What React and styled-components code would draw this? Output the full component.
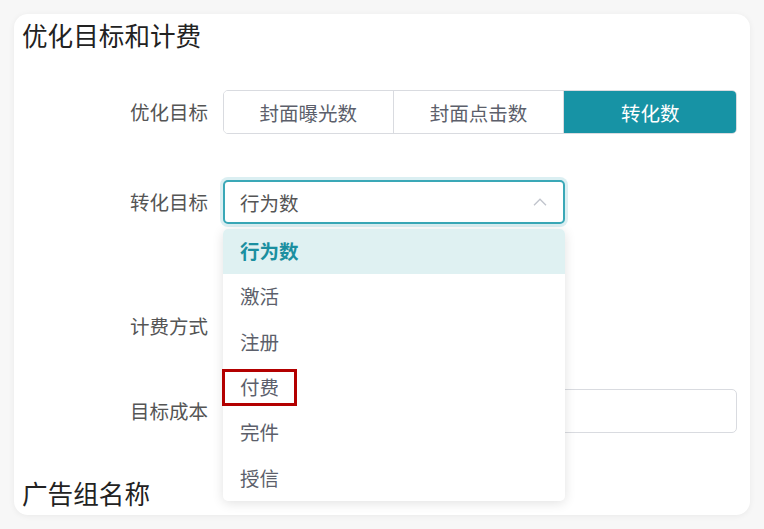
import React from "react";
import styled, { createGlobalStyle } from "styled-components";

const Global = createGlobalStyle`
  html, body { margin: 0; padding: 0; background: #f7f7f7; }
  body { font-family: "Noto Sans CJK SC", "Noto Sans", sans-serif; }
  * { box-sizing: border-box; }
`;

const Page = styled.div`
  width: 764px;
  height: 529px;
  padding: 14px 14px 0 14px;
  overflow: hidden;
`;

const Card = styled.div`
  width: 736px;
  height: 501px;
  background: #fff;
  border-radius: 14px;
  box-shadow: 0 1px 6px rgba(0, 0, 0, 0.06);
  padding: 3px 13px 0 8px;
  position: relative;
`;

const Title = styled.h2`
  margin: ${(p) => p.$mt || 0}px 0 0 0;
  font-size: 25.6px;
  font-weight: 400;
  line-height: 36px;
  color: #222;
`;

const Row = styled.div`
  display: grid;
  grid-template-columns: 186px 514px;
  column-gap: 15px;
  align-items: center;
  height: 44px;
  margin-top: ${(p) => p.$mt}px;
  position: relative;
`;

const Label = styled.div`
  text-align: right;
  font-size: 19.5px;
  color: #555;
  line-height: 44px;
`;

const Segmented = styled.div`
  display: flex;
  height: 44px;
  border: 1px solid #d9dbe0;
  border-radius: 5px;
  overflow: hidden;
`;

const Segment = styled.div`
  flex: ${(p) => p.$w};
  display: flex;
  align-items: center;
  justify-content: center;
  font-size: 19.5px;
  color: ${(p) => (p.$active ? "#fff" : "#5c5f6b")};
  background: ${(p) => (p.$active ? "#1793a5" : "#fff")};
  border-left: ${(p) => (p.$first ? "none" : "1px solid #d9dbe0")};
`;

const SelectWrap = styled.div`
  position: relative;
  width: 342px;
`;

const SelectBox = styled.div`
  height: 44px;
  border: 2px solid #3aa8b7;
  border-radius: 5px;
  box-shadow: 0 0 0 3px rgba(58, 168, 183, 0.18);
  display: flex;
  align-items: center;
  justify-content: space-between;
  padding: 0 16px 0 15px;
  font-size: 19.5px;
  color: #555;
  background: #fff;
`;

const Menu = styled.ul`
  position: absolute;
  left: 0;
  top: 49px;
  width: 342px;
  margin: 0;
  padding: 0;
  list-style: none;
  background: #fff;
  border-radius: 5px;
  box-shadow: 0 2px 12px rgba(0, 0, 0, 0.12);
  z-index: 5;
  overflow: visible;
`;

const Item = styled.li`
  position: relative;
  height: 45.3px;
  display: flex;
  align-items: center;
  padding-left: 17px;
  padding-bottom: 2px;
  font-size: 19.5px;
  font-weight: ${(p) => (p.$active ? 700 : 400)};
  color: ${(p) => (p.$active ? "#1a8fa0" : "#5c5f6b")};
  background: ${(p) => (p.$active ? "#dff1f2" : "transparent")};
  &:first-child { border-radius: 5px 5px 0 0; }
`;

const Highlight = styled.span`
  position: absolute;
  left: -1px;
  top: 4px;
  width: 75px;
  height: 37px;
  border: 3px solid #b30000;
`;

const Input = styled.div`
  height: 44px;
  border: 1px solid #d9dbe0;
  border-radius: 5px;
  background: #fff;
`;

const Chevron = () => (
  <svg width="14" height="8" viewBox="0 0 14 8" fill="none">
    <path d="M1 7.2 L7 1.2 L13 7.2" stroke="#c0c4cc" strokeWidth="1.3" />
  </svg>
);

const options = ["行为数", "激活", "注册", "付费", "完件", "授信"];

export default function App() {
  return (
    <Page>
      <Global />
      <Card>
        <Title>优化目标和计费</Title>
        <Row $mt={37}>
          <Label>优化目标</Label>
          <Segmented>
            <Segment $first $w={170}>封面曝光数</Segment>
            <Segment $w={171}>封面点击数</Segment>
            <Segment $active $w={173}>转化数</Segment>
          </Segmented>
        </Row>
        <Row $mt={46}>
          <Label>转化目标</Label>
          <SelectWrap>
            <SelectBox>
              <span>行为数</span>
              <Chevron />
            </SelectBox>
            <Menu>
              {options.map((o, i) => (
                <Item key={o} $active={i === 0}>
                  {o}
                  {o === "付费" && <Highlight />}
                </Item>
              ))}
            </Menu>
          </SelectWrap>
        </Row>
        <Row $mt={80}>
          <Label>计费方式</Label>
          <div />
        </Row>
        <Row $mt={41}>
          <Label>目标成本</Label>
          <Input />
        </Row>
        <Title $mt={42}>广告组名称</Title>
      </Card>
    </Page>
  );
}
